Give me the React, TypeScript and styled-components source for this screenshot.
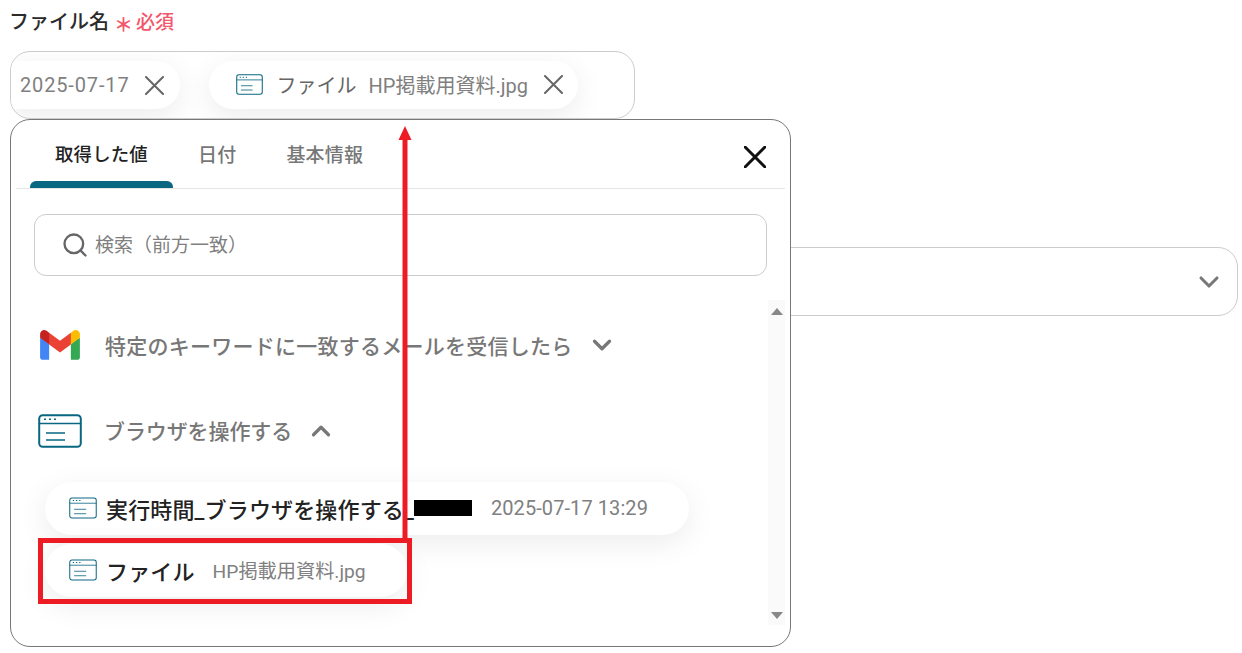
// App.tsx
import React from "react";
import styled, { createGlobalStyle } from "styled-components";
import { ChevronDown, ChevronUp, Search } from "lucide-react";

const GlobalStyle = createGlobalStyle`
  html, body {
    margin: 0;
    padding: 0;
    background: #ffffff;
  }
  body {
    font-family: Roboto, "Noto Sans CJK JP", "Noto Sans", sans-serif;
    color: #222222;
  }
`;

const Page = styled.div`
  position: relative;
  width: 1242px;
  height: 653px;
  overflow: hidden;
  padding: 6px 4px 0 10px;
  box-sizing: border-box;
`;

const LabelRow = styled.div`
  display: flex;
  align-items: center;
  height: 28px;
  margin-left: -1px;
`;

const LabelText = styled.span`
  font-size: 20px;
  font-weight: 500;
  color: #2b2b2b;
`;

const Asterisk = styled.span`
  margin-left: 5px;
  padding-top: 7px;
  font-size: 19px;
  font-weight: 700;
  color: #f4566b;
`;

const Required = styled.span`
  margin-left: 3px;
  padding-top: 1px;
  font-size: 19px;
  font-weight: 500;
  color: #f4566b;
`;

const TokenField = styled.div`
  display: flex;
  align-items: center;
  gap: 29px;
  width: 625px;
  height: 68px;
  margin-top: 17px;
  box-sizing: border-box;
  border: 1px solid #cccccc;
  border-radius: 20px;
  overflow: hidden;
  background: #ffffff;
`;

const Pill = styled.div<{ $height?: number }>`
  display: inline-flex;
  align-items: center;
  flex-shrink: 0;
  height: ${(p) => p.$height ?? 48}px;
  border-radius: 27px;
  background: #ffffff;
  box-shadow: 0 8px 30px rgba(0, 0, 0, 0.08);
`;

const DatePill = styled(Pill)`
  padding: 0 16px 0 9px;
  border-top-left-radius: 0;
  border-bottom-left-radius: 0;
`;

const FilePill = styled(Pill)`
  padding: 0 15px 2px 27px;
  box-sizing: border-box;
`;

const PillName = styled.span`
  margin-left: 13px;
  font-size: 20px;
  color: #666666;
`;

const PillValue = styled.span<{ $gap?: number; $size?: number; $spacing?: number }>`
  margin-left: ${(p) => p.$gap ?? 12}px;
  font-size: ${(p) => p.$size ?? 20}px;
  letter-spacing: ${(p) => p.$spacing ?? 0}px;
  color: #808080;
  white-space: nowrap;
`;

const RemoveButton = styled.span`
  display: inline-flex;
  margin-left: 16px;
  color: #666666;
`;

const SelectField = styled.div`
  display: flex;
  align-items: center;
  justify-content: flex-end;
  height: 69px;
  margin-top: 128px;
  padding-right: 12px;
  box-sizing: border-box;
  border: 1px solid #cccccc;
  border-radius: 20px;
  color: #777777;
`;

const Popup = styled.div`
  position: absolute;
  top: 119px;
  left: 10px;
  width: 781px;
  height: 528px;
  box-sizing: border-box;
  border: 1px solid #777777;
  border-radius: 20px;
  background: #ffffff;
  overflow: hidden;
  padding: 0 5px;
`;

const TabBar = styled.div`
  display: flex;
  align-items: stretch;
  height: 69px;
  padding-left: 14px;
  border-bottom: 1px solid #e6e6e6;
  box-sizing: border-box;
`;

const Tab = styled.div<{ $active?: boolean }>`
  position: relative;
  display: flex;
  align-items: center;
  justify-content: center;
  height: 68px;
  padding: 0 25px 2px;
  box-sizing: border-box;
  font-size: ${(p) => (p.$active ? 18.4 : 19)}px;
  font-weight: 500;
  letter-spacing: ${(p) => (p.$active ? 0.2 : 0.2)}px;
  color: ${(p) => (p.$active ? "#222222" : "#777777")};

  &::after {
    content: "";
    display: ${(p) => (p.$active ? "block" : "none")};
    position: absolute;
    left: 0;
    right: 0;
    bottom: 0;
    height: 7px;
    border-radius: 6px 6px 0 0;
    background: #0a6781;
  }
`;

const CloseButton = styled.div`
  display: flex;
  align-items: center;
  margin-left: auto;
  padding: 5px 19px 0 0;
  color: #111111;
`;

const SearchBox = styled.div`
  display: flex;
  align-items: center;
  height: 62px;
  margin: 25px 18px 0;
  padding-left: 26px;
  box-sizing: border-box;
  border: 1px solid #cccccc;
  border-radius: 12px;
  color: #666666;
`;

const SearchHint = styled.span`
  margin-left: 6px;
  font-size: 19px;
  line-height: 24px;
  padding-top: 2px;
  color: #808080;
`;

const ListArea = styled.div`
  display: flex;
  margin-top: 24px;
`;

const List = styled.div`
  flex: 1;
  min-width: 0;
`;

const Scrollbar = styled.div`
  display: flex;
  flex-direction: column;
  align-items: center;
  justify-content: space-between;
  width: 17px;
  height: 325px;
  padding: 8px 0 6px;
  box-sizing: border-box;
  background: #fafafa;
`;

const Triangle = styled.span<{ $down?: boolean }>`
  width: 0;
  height: 0;
  border-left: 6.5px solid transparent;
  border-right: 6.5px solid transparent;
  ${(p) => (p.$down ? "border-top" : "border-bottom")}: 7px solid #888888;
`;

const GroupRow = styled.div<{ $top: number; $left: number }>`
  display: flex;
  align-items: center;
  height: 36px;
  margin-top: ${(p) => p.$top}px;
  margin-left: ${(p) => p.$left}px;
  color: #777777;
`;

const GroupTitle = styled.span<{ $gap: number; $spacing: number }>`
  margin-left: ${(p) => p.$gap}px;
  margin-right: 14px;
  padding-bottom: ${(p) => (p.$spacing < 0 ? 2 : 0)}px;
  font-size: 21px;
  font-weight: 500;
  letter-spacing: ${(p) => p.$spacing}px;
  color: #777777;
`;

const ResultStack = styled.div`
  display: flex;
  flex-direction: column;
  align-items: flex-start;
  gap: 9px;
  margin-top: 33px;
  margin-left: 29px;
`;

const ResultPill = styled(Pill)`
  padding: 0 41px 1px 24px;
  box-sizing: border-box;
`;

const ResultName = styled.span`
  margin-left: 9px;
  padding-bottom: 1px;
  font-size: 22px;
  font-weight: 500;
  letter-spacing: 0.15px;
  color: #222222;
  white-space: nowrap;
`;

const Redaction = styled.span`
  width: 58px;
  height: 16px;
  background: #000000;
`;

const RedBox = styled.div`
  position: absolute;
  top: 538px;
  left: 38px;
  width: 374px;
  height: 66px;
  box-sizing: border-box;
  border: 5px solid #ed1c24;
`;

const ArrowOverlay = styled.svg`
  position: absolute;
  top: 126px;
  left: 398px;
`;

const CrossIcon: React.FC<{ size: number; stroke: number }> = ({ size, stroke }) => (
  <svg width={size} height={size} viewBox={`0 0 ${size} ${size}`} fill="none" stroke="currentColor">
    <path d={`M1 1L${size - 1} ${size - 1}M${size - 1} 1L1 ${size - 1}`} strokeWidth={stroke} strokeLinecap="round" />
  </svg>
);

const BrowserIcon: React.FC<{ width: number; height: number; stroke?: number }> = ({
  width,
  height,
  stroke = 2,
}) => (
  <svg width={width} height={height} viewBox="0 0 44 34" fill="none" style={{ flexShrink: 0 }}>
    <rect x="1.2" y="1.2" width="41.6" height="31.6" rx="3.5" stroke="#0a6781" strokeWidth={stroke} />
    <path d="M1 9.5h42" stroke="#0a6781" strokeWidth={stroke * 0.8} />
    <path d="M6 5.3h2M11 5.3h2M16 5.3h2" stroke="#0a6781" strokeWidth="1.6" />
    <path d="M8 19h19M8 26h19" stroke="#0a6781" strokeWidth={stroke * 0.8} />
  </svg>
);

const GmailLogo: React.FC = () => (
  <svg width="40" height="30" viewBox="0 0 256 193" style={{ flexShrink: 0 }}>
    <path fill="#4285F4" d="M58.182 192.05V93.14L27.507 65.077 0 49.504v125.091c0 9.658 7.825 17.455 17.455 17.455h40.727Z" />
    <path fill="#34A853" d="M197.818 192.05h40.727c9.659 0 17.455-7.826 17.455-17.455V49.505l-31.156 17.837-27.026 25.798v98.91Z" />
    <path fill="#EA4335" d="m58.182 93.14-4.174-38.647 4.174-36.989L128 69.868l69.818-52.364 4.669 34.992-4.669 40.644L128 145.504z" />
    <path fill="#FBBC04" d="M197.818 17.504V93.14L256 49.504V26.231c0-21.585-24.64-33.89-41.89-20.945l-16.292 12.218Z" />
    <path fill="#C5221F" d="m0 49.504 26.759 20.07L58.182 93.14V17.504L41.89 5.286C24.61-7.66 0 4.646 0 26.23v23.273Z" />
  </svg>
);

const App: React.FC = () => {
  return (
    <>
      <GlobalStyle />
      <Page>
        <LabelRow>
          <LabelText>ファイル名</LabelText>
          <Asterisk>＊</Asterisk>
          <Required>必須</Required>
        </LabelRow>

        <TokenField>
          <DatePill>
            <PillValue $gap={0} $spacing={0.85}>
              2025-07-17
            </PillValue>
            <RemoveButton>
              <CrossIcon size={19} stroke={2} />
            </RemoveButton>
          </DatePill>
          <FilePill>
            <BrowserIcon width={27} height={21} stroke={1.7} />
            <PillName>ファイル</PillName>
            <PillValue $spacing={0.02}>HP掲載用資料.jpg</PillValue>
            <RemoveButton>
              <CrossIcon size={19} stroke={2} />
            </RemoveButton>
          </FilePill>
        </TokenField>

        <SelectField>
          <ChevronDown size={32} strokeWidth={2.3} />
        </SelectField>

        <Popup>
          <TabBar>
            <Tab $active>取得した値</Tab>
            <Tab>日付</Tab>
            <Tab>基本情報</Tab>
            <CloseButton>
              <CrossIcon size={22} stroke={3} />
            </CloseButton>
          </TabBar>

          <SearchBox>
            <Search size={28} strokeWidth={2} />
            <SearchHint>検索（前方一致）</SearchHint>
          </SearchBox>

          <ListArea>
            <List>
              <GroupRow $top={27} $left={24}>
                <GmailLogo />
                <GroupTitle $gap={25} $spacing={0.25}>
                  特定のキーワードに一致するメールを受信したら
                </GroupTitle>
                <ChevronDown size={30} strokeWidth={2.6} />
              </GroupRow>
              <GroupRow $top={50} $left={22}>
                <BrowserIcon width={44} height={34} />
                <GroupTitle $gap={22} $spacing={-0.1}>
                  ブラウザを操作する
                </GroupTitle>
                <ChevronUp size={30} strokeWidth={2.6} />
              </GroupRow>
              <ResultStack>
                <ResultPill $height={53}>
                  <BrowserIcon width={28} height={22} stroke={1.6} />
                  <ResultName>実行時間_ブラウザを操作する_</ResultName>
                  <Redaction />
                  <PillValue $gap={19} $spacing={0.08}>
                    2025-07-17 13:29
                  </PillValue>
                </ResultPill>
                <ResultPill $height={53}>
                  <BrowserIcon width={28} height={22} stroke={1.6} />
                  <ResultName>ファイル</ResultName>
                  <PillValue $gap={18} $size={19.2}>
                    HP掲載用資料.jpg
                  </PillValue>
                </ResultPill>
              </ResultStack>
            </List>
            <Scrollbar>
              <Triangle />
              <Triangle $down />
            </Scrollbar>
          </ListArea>
        </Popup>

        <RedBox />
        <ArrowOverlay width="14" height="414" viewBox="0 0 14 414">
          <path d="M7 0L13.5 14H9.5V414H4.5V14H0.5Z" fill="#ed1c24" />
        </ArrowOverlay>
      </Page>
    </>
  );
};

export default App;
